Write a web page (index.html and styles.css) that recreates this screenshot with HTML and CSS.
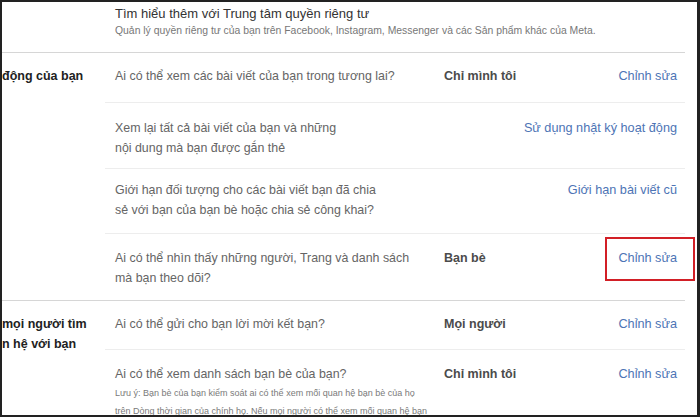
FILE: index.html
```html
<!DOCTYPE html>
<html lang="vi">
<head>
<meta charset="utf-8">
<link rel="stylesheet" href="styles.css">
</head>
<body>
<div class="frame">
  <div class="top">
    <div class="top-title">Tìm hiểu thêm với Trung tâm quyền riêng tư</div>
    <div class="top-sub">Quản lý quyền riêng tư của bạn trên Facebook, Instagram, Messenger và các Sản phẩm khác của Meta.</div>
  </div>

  <div class="section">
    <div class="label">động của bạn</div>
    <div class="rows">
      <div class="row r1">
        <div class="q">Ai có thể xem các bài viết của bạn trong tương lai?</div>
        <div class="v">Chỉ mình tôi</div>
        <div class="a"><span class="link">Chỉnh sửa</span></div>
      </div>
      <div class="row r2">
        <div class="q">Xem lại tất cả bài viết của bạn và những<br>nội dung mà bạn được gắn thẻ</div>
        <div class="v"></div>
        <div class="a"><span class="link">Sử dụng nhật ký hoạt động</span></div>
      </div>
      <div class="row r3">
        <div class="q">Giới hạn đối tượng cho các bài viết bạn đã chia<br>sẻ với bạn của bạn bè hoặc chia sẻ công khai?</div>
        <div class="v"></div>
        <div class="a"><span class="link">Giới hạn bài viết cũ</span></div>
      </div>
      <div class="row r4">
        <div class="q">Ai có thể nhìn thấy những người, Trang và danh sách<br>mà bạn theo dõi?</div>
        <div class="v">Bạn bè</div>
        <div class="a"><span class="link boxed">Chỉnh sửa</span></div>
      </div>
    </div>
  </div>

  <div class="section">
    <div class="label">mọi người tìm<br>n hệ với bạn</div>
    <div class="rows">
      <div class="row r5">
        <div class="q">Ai có thể gửi cho bạn lời mời kết bạn?</div>
        <div class="v">Mọi người</div>
        <div class="a"><span class="link">Chỉnh sửa</span></div>
      </div>
      <div class="row r6">
        <div class="q">Ai có thể xem danh sách bạn bè của bạn?
          <div class="note">Lưu ý: Bạn bè của bạn kiểm soát ai có thể xem mối quan hệ bạn bè của họ<br>trên Dòng thời gian của chính họ. Nếu mọi người có thể xem mối quan hệ bạn</div>
        </div>
        <div class="v">Chỉ mình tôi</div>
        <div class="a"><span class="link">Chỉnh sửa</span></div>
      </div>
    </div>
  </div>
</div>
</body>
</html>
```

FILE: styles.css
```css
* { box-sizing: border-box; }
html, body { margin: 0; padding: 0; background: #fff; }
body { font-family: "Liberation Sans", Arial, sans-serif; }

.frame {
  width: 700px;
  height: 417px;
  border: 2px solid #222;
  border-right-width: 3px;
  background: #fff;
  overflow: hidden;
}

.top {
  height: 50px;
  padding: 2px 0 0 113px;
}
.top-title {
  font-size: 13px;
  line-height: 19px;
  color: #333;
}
.top-sub {
  font-size: 10.4px;
  line-height: 14px;
  color: #777;
  margin-top: 1px;
}

.section {
  display: grid;
  grid-template-columns: 103px 580px;
  border-top: 1px solid #d6d6d6;
  width: 683px;
}

.label {
  font-size: 12.5px;
  font-weight: bold;
  line-height: 20px;
  color: #222;
  padding-top: 13px;
  white-space: nowrap;
}

.row {
  display: grid;
  grid-template-columns: 329px 1fr auto;
  align-items: start;
  padding: 13px 8px 13px 10px;
  font-size: 12.4px;
  line-height: 20px;
  border-top: 1px solid #ededed;
  white-space: nowrap;
}
.row:first-child { border-top: none; }
.r1 { height: 49px; }
.r2 { height: 66px; padding-top: 15px; }
.r3 { height: 65px; padding-top: 11px; }
.r4 { height: 67px; padding-top: 14px; }
.r5 { height: 48px; padding-top: 13px; }
.r6 { padding-top: 14px; }

.q { color: #656565; }
.v { color: #4b4b4b; font-weight: bold; font-size: 12.5px; }
.a { text-align: right; }
.link { color: #4d74b5; font-size: 12.7px; }
.link.boxed {
  display: inline-block;
  position: relative;
}
.link.boxed::after {
  content: "";
  position: absolute;
  left: -13px;
  right: -18px;
  top: -11px;
  bottom: -13px;
  border: 2px solid #d21f26;
}

.note {
  font-size: 9px;
  line-height: 18px;
  color: #7a7a7a;
  white-space: nowrap;
}
```
